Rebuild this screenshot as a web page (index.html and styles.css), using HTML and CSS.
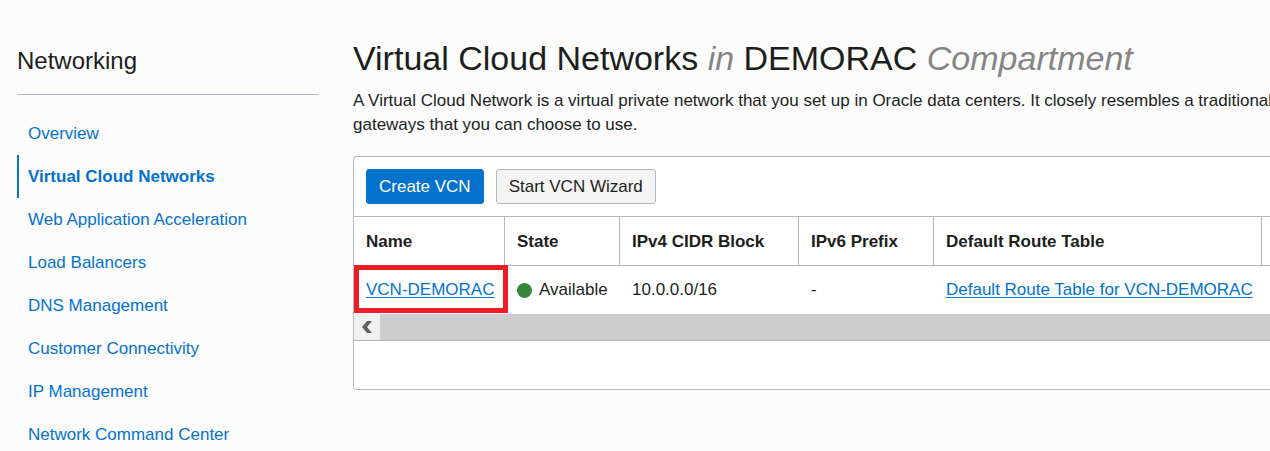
FILE: index.html
```html
<!DOCTYPE html>
<html lang="en">
<head>
<meta charset="utf-8">
<title>Virtual Cloud Networks</title>
<link rel="stylesheet" href="styles.css">
</head>
<body>
<div class="page">
  <aside class="sidebar">
    <h2 class="sidebar-title">Networking</h2>
    <nav class="nav" aria-label="Networking">
      <a class="nav-item" href="#">Overview</a>
      <a class="nav-item active" href="#" aria-current="page">Virtual Cloud Networks</a>
      <a class="nav-item" href="#">Web Application Acceleration</a>
      <a class="nav-item" href="#">Load Balancers</a>
      <a class="nav-item" href="#">DNS Management</a>
      <a class="nav-item" href="#">Customer Connectivity</a>
      <a class="nav-item" href="#">IP Management</a>
      <a class="nav-item" href="#">Network Command Center</a>
    </nav>
  </aside>
  <main class="main">
    <h1 class="title">Virtual Cloud Networks <em>in</em> DEMORAC <em>Compartment</em></h1>
    <p class="intro">A Virtual Cloud Network is a virtual private network that you set up in Oracle data centers. It closely resembles a traditional network, with<br>gateways that you can choose to use.</p>
    <section class="panel">
      <div class="toolbar">
        <button class="btn primary" type="button">Create VCN</button>
        <button class="btn" type="button">Start VCN Wizard</button>
      </div>
      <table class="grid">
        <colgroup><col class="c-name"><col class="c-state"><col class="c-v4"><col class="c-v6"><col class="c-route"><col></colgroup>
        <thead>
          <tr><th>Name</th><th>State</th><th>IPv4 CIDR Block</th><th>IPv6 Prefix</th><th>Default Route Table</th><th></th></tr>
        </thead>
        <tbody>
          <tr>
            <td class="marked"><a href="#">VCN-DEMORAC</a></td>
            <td><span class="state"><span class="dot"></span>Available</span></td>
            <td>10.0.0.0/16</td>
            <td>-</td>
            <td><a href="#">Default Route Table for VCN-DEMORAC</a></td>
            <td></td>
          </tr>
        </tbody>
      </table>
      <div class="scrollbar">
        <button class="scroll-left" type="button" aria-label="Scroll left">
          <svg width="12" height="14" viewBox="0 0 12 14"><path d="M6 1h5L6 7l5 6H6L1 7z" fill="#606060"/></svg>
        </button>
        <div class="thumb"></div>
      </div>
      <div class="panel-footer"></div>
    </section>
  </main>
</div>
</body>
</html>
```
FILE: styles.css
```css
* { box-sizing: border-box; }

body {
  margin: 0;
  height: 100vh;
  overflow: hidden;
  background: #fcfcfc;
  color: #201e1c;
  font: 17px/24px "Liberation Sans", Arial, sans-serif;
}

a { color: #0572ce; }

.page { display: flex; gap: 34px; padding: 0 0 0 17px; }

.sidebar { flex: 0 0 302px; padding-top: 46px; }

.sidebar-title {
  margin: 0 0 17px;
  padding-bottom: 18px;
  border-bottom: 1px solid #aeb8c4;
  font-size: 24px;
  font-weight: 400;
  line-height: 30px;
}

.nav { display: flex; flex-direction: column; }

.nav-item {
  padding: 10px 0 9px 9px;
  border-left: 2px solid transparent;
  text-decoration: none;
}

.nav-item.active { border-left-color: #0572ce; font-weight: 700; }

.main { flex: 1; min-width: 0; padding-top: 38px; }

.title {
  margin: 0 0 11px;
  font-size: 34px;
  font-weight: 400;
  line-height: 40px;
  white-space: nowrap;
}

.title em { color: #858585; }

.intro { margin: 0 0 19px; overflow: hidden; white-space: nowrap; }

.panel {
  border: 1px solid #b3b8c1;
  border-right: 0;
  border-radius: 4px 0 0 4px;
  background: #fff;
}

.toolbar { display: flex; gap: 12px; padding: 12px; }

.btn {
  padding: 5px 12px 4px;
  border: 1px solid #b3b8c1;
  border-radius: 3px;
  background: #f5f5f5;
  color: #201e1c;
  font: inherit;
}

.btn.primary { border-color: #0572ce; background: #0572ce; color: #fff; }

.grid { width: 100%; border-collapse: separate; border-spacing: 0; table-layout: fixed; }

.c-name { width: 151px; }
.c-state { width: 115px; }
.c-v4 { width: 179px; }
.c-v6 { width: 135px; }
.c-route { width: 328px; }

.grid th,
.grid td { height: 48px; padding: 0 12px; text-align: left; white-space: nowrap; }

.grid th {
  height: 50px;
  padding-top: 2px;
  border: solid #b3b8c1;
  border-width: 1px 1px 1px 0;
}

.grid th:last-child { border-right: 0; padding: 0; }
.grid td:last-child { padding: 0; }

.grid td a { text-underline-offset: 2px; text-decoration-thickness: 1px; text-decoration-skip-ink: none; }

.marked { position: relative; }

/* Callout frame around the highlighted cell */
.marked::after {
  content: "";
  position: absolute;
  inset: -1px -3px 1px 0;
  border: 5px solid #ee1c25;
  pointer-events: none;
}

.state { display: flex; align-items: center; gap: 7px; }
.dot { width: 15px; height: 15px; border-radius: 50%; background: #36873a; }

.scrollbar { display: flex; height: 26px; border-bottom: 1px solid #b3b8c1; box-sizing: content-box; }

.scroll-left {
  display: flex;
  align-items: center;
  justify-content: center;
  width: 26px;
  padding: 0;
  border: 0;
  background: #f0f0f0;
}

.thumb { flex: 1; background: #cdcdcd; }

.panel-footer { height: 48px; }
```
